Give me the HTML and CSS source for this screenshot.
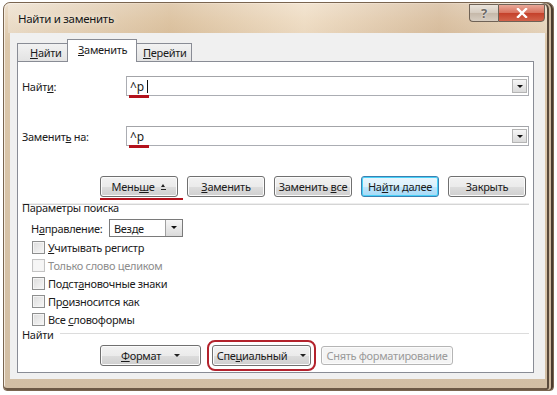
FILE: index.html
```html
<!DOCTYPE html>
<html lang="ru">
<head>
  <meta charset="UTF-8">
  <title>Найти и заменить</title>
  <link rel="stylesheet" href="styles.css">
</head>
<body>
  <div class="window">
    <div class="titlebar">
      <span class="title">Найти и заменить</span>
      <div class="caption-btns">
        <div class="cap help">?</div>
        <div class="cap close">
          <svg width="12" height="10" viewBox="0 0 12 10"><path d="M2 1 L10 9 M10 1 L2 9" stroke="#fff" stroke-width="2.4" stroke-linecap="square"/></svg>
        </div>
      </div>
    </div>

    <div class="client">
      <!-- Tabs -->
      <div class="tabs">
        <div class="tab"><u>Н</u>айти</div>
        <div class="tab active"><u>З</u>аменить</div>
        <div class="tab"><u>П</u>ерейти</div>
      </div>

      <div class="panel">
        <div class="field first">
          <span class="label">Найт<u>и</u>:</span>
          <div class="combo">
            <span class="value marked">^p</span><span class="caret"></span>
            <span class="arrow-btn"></span>
          </div>
        </div>

        <div class="field">
          <span class="label">Заменит<u>ь</u> на:</span>
          <div class="combo">
            <span class="value marked">^p</span>
            <span class="arrow-btn"></span>
          </div>
        </div>

        <div class="actions">
          <button class="btn marked-btn"><span>Мень<u>ш</u>е</span><span class="up-glyph"></span></button>
          <button class="btn"><span><u>З</u>аменить</span></button>
          <button class="btn"><span>Заменить <u>в</u>се</span></button>
          <button class="btn default"><span>На<u>й</u>ти далее</span></button>
          <button class="btn"><span>Закрыть</span></button>
        </div>

        <!-- Search options -->
        <div class="options">
          <div class="section-title">Параметры поиска</div>
          <div class="direction">
            <span>Н<u>а</u>правление:</span>
            <div class="select">
              <span>Везде</span>
              <span class="arrow-btn"></span>
            </div>
          </div>
          <div class="check"><span class="box"></span><span><u>У</u>читывать регистр</span></div>
          <div class="check disabled"><span class="box"></span><span>Только слово целиком</span></div>
          <div class="check"><span class="box"></span><span>Подст<u>а</u>новочные знаки</span></div>
          <div class="check"><span class="box"></span><span>Пр<u>о</u>износится как</span></div>
          <div class="check"><span class="box"></span><span>Все <u>с</u>ловоформы</span></div>
        </div>

        <div class="find-group">
          <div class="group-title"><span>Найти</span><span class="rule"></span></div>
          <div class="format-row">
            <button class="btn menu w-format"><span><u>Ф</u>ормат</span><span class="tri"></span></button>
            <button class="btn menu w-special boxed"><span>Спе<u>ц</u>иальный</span><span class="tri"></span></button>
            <button class="btn w-clear" disabled><span>Снять форматирование</span></button>
          </div>
        </div>
      </div>
    </div>
  </div>
</body>
</html>
```

FILE: styles.css
```css
body {
  margin: 0;
  background: #fff;
  font-family: "Noto Sans", "Open Sans", sans-serif;
  font-size: 11px;
  letter-spacing: -0.3px;
  color: #1b1b1b;
}

u {
  text-decoration: underline;
  text-underline-offset: 1px;
}

/* ---- window frame ---- */
.window {
  box-sizing: border-box;
  width: 551px;
  height: 389px;
  margin: 2px 0 0 3px;
  border: 1px solid #7a6550;
  border-radius: 7px 7px 4px 4px;
  padding: 0 8px 11px 6px;
  display: flex;
  flex-direction: column;
  background: linear-gradient(180deg, #ecdfcd 0px, #e6d3b9 18px, #dcc7aa 40px, #d2bea4 100%);
  box-shadow: inset -2px 0 0 #4b3c2f, inset -4px 0 0 #cdb89e, inset -6px 0 0 #5a4a3b,
              inset 0 -2px 0 #6c5845, inset 1px 1px 0 #f5ece0;
}

.titlebar {
  height: 30px;
  display: flex;
  align-items: flex-start;
  justify-content: space-between;
  background: linear-gradient(90deg, rgba(255,255,255,0.25), rgba(200,160,110,0.3) 30%, rgba(255,240,220,0.35) 55%, rgba(190,150,110,0.3) 80%, rgba(255,255,255,0.1));
  margin: 0 -2px 0 -2px;
}

.title {
  margin: 8px 0 0 10px;
  font-size: 11.5px;
  color: #151515;
  text-shadow: 0 0 6px rgba(255,255,255,0.9);
}

.caption-btns {
  display: flex;
  margin: 1px 2px 0 0;
}

.cap {
  height: 18px;
  display: flex;
  align-items: center;
  justify-content: center;
  border: 1px solid #6f6256;
  box-sizing: border-box;
}

.cap.help {
  width: 29px;
  border-radius: 0 0 0 4px;
  border-right: none;
  background: linear-gradient(180deg, #eae4dc, #d5cbbf 50%, #c5b8a9 51%, #d7cdc1);
  color: #6e6a66;
  font-weight: bold;
  font-size: 13px;
  text-shadow: 0 0 2px #fff;
}

.cap.close {
  width: 47px;
  border-radius: 0 0 4px 0;
  background: linear-gradient(180deg, #e9a898, #d8705c 50%, #c4402a 51%, #d2634a);
}

/* ---- client area ---- */
.client {
  flex: 1;
  background: #f0f0f0;
  padding: 6px 11px 6px 7px;
  display: flex;
  flex-direction: column;
}

.tabs {
  display: flex;
  align-items: flex-end;
  height: 22px;
  position: relative;
  z-index: 1;
}

.tab {
  height: 18px;
  line-height: 17px;
  box-sizing: border-box;
  padding: 0 0 0 12px;
  border: 1px solid #898c95;
  border-bottom: none;
  background: linear-gradient(180deg, #f2f2f2, #e3e3e3);
  margin-right: -1px;
}

.tab:nth-child(1) { width: 52px; }
.tab:nth-child(3) { width: 57px; padding-left: 7px; }

.tab.active {
  height: 23px;
  width: 70px;
  padding-left: 10px;
  line-height: 19px;
  background: #fff;
  margin-bottom: -1px;
  margin-left: -1px;
  margin-right: -2px;
  position: relative;
}

.panel {
  flex: 1;
  background: #fff;
  border: 1px solid #898c95;
  padding: 0 4px 0 4px;
  display: flex;
  flex-direction: column;
}

/* ---- find / replace fields ---- */
.field {
  display: flex;
  align-items: center;
  height: 20px;
  margin-top: 30px;
}

.field.first { margin-top: 14px; }

.label {
  width: 104px;
}

.combo {
  flex: 1;
  height: 20px;
  box-sizing: border-box;
  border: 1px solid #abadb3;
  border-top-color: #a3a4a8;
  display: flex;
  align-items: center;
  padding: 0 1px 0 3px;
  font-size: 12px;
  letter-spacing: 0;
}

.value {
  position: relative;
}

/* red marks drawn over the screenshot */
.value.marked::after {
  content: "";
  position: absolute;
  left: -1px;
  right: -5px;
  top: 17px;
  height: 3px;
  background: #b4121c;
}

.caret {
  width: 1px;
  height: 13px;
  background: #111;
  margin-left: 3px;
}

.arrow-btn {
  margin-left: auto;
  width: 15px;
  height: 14px;
  box-sizing: border-box;
  border: 1px solid #b4b4b4;
  background: linear-gradient(180deg, #f6f6f6, #dadada);
  position: relative;
}

.arrow-btn::after {
  content: "";
  position: absolute;
  left: 4px;
  top: 5px;
  border-left: 3px solid transparent;
  border-right: 3px solid transparent;
  border-top: 3px solid #111;
}

/* ---- buttons ---- */
.actions {
  display: flex;
  gap: 9px;
  margin: 30px 0 0 78px;
}

.btn {
  height: 21px;
  width: 78px;
  box-sizing: border-box;
  border: 1px solid #707070;
  border-radius: 3px;
  background: linear-gradient(180deg, #f2f2f2 0%, #ebebeb 50%, #dddddd 51%, #cfcfcf 100%);
  box-shadow: inset 0 0 0 1px #fbfbfb;
  font-family: inherit;
  font-size: 11px;
  letter-spacing: -0.3px;
  color: #1b1b1b;
  padding: 0;
  display: flex;
  align-items: center;
  justify-content: center;
}

.btn.default {
  border-color: #3c7fb1;
  background: linear-gradient(180deg, #eaf6fd 0%, #d9f0fc 50%, #bee6fd 51%, #a7d9f5 100%);
  box-shadow: inset 0 0 0 1px #48d2f8;
}

.marked-btn {
  position: relative;
}

.marked-btn::after {
  content: "";
  position: absolute;
  left: -1px;
  right: -6px;
  top: 21px;
  height: 2px;
  background: #b4121c;
}

.up-glyph {
  margin-left: 7px;
  width: 5px;
  height: 6px;
  position: relative;
}

.up-glyph::before {
  content: "";
  position: absolute;
  top: 0;
  left: 0;
  border-left: 2.5px solid transparent;
  border-right: 2.5px solid transparent;
  border-bottom: 3px solid #222;
}

.up-glyph::after {
  content: "";
  position: absolute;
  bottom: 0;
  left: 0;
  width: 5px;
  height: 1px;
  background: #222;
}

/* ---- search options ---- */
.options {
  margin-top: 7px;
  border-top: 1px solid #d5d5d5;
  box-shadow: 0 -1px 0 #eeeeee;
}

.section-title {
  line-height: 14px;
  margin-top: -4px;
}

.direction {
  display: flex;
  align-items: center;
  margin: 4px 0 1px 9px;
  height: 18px;
}

.direction > span:first-child {
  width: 78px;
}

.select {
  width: 74px;
  height: 18px;
  box-sizing: border-box;
  border: 1px solid #7a7a7a;
  display: flex;
  align-items: center;
  padding: 0 0 0 4px;
}

.select .arrow-btn {
  height: 16px;
  width: 17px;
  border: none;
  border-left: 1px solid #a0a0a0;
}

.select .arrow-btn::after {
  left: 5px;
  top: 6px;
}

.check {
  display: flex;
  align-items: center;
  height: 18px;
  margin-left: 10px;
}

.box {
  width: 13px;
  height: 13px;
  box-sizing: border-box;
  border: 1px solid #8e8f8f;
  background: linear-gradient(135deg, #dcdcdc, #f7f7f7);
  box-shadow: inset 0 0 0 1px #f4f4f4;
  margin-right: 3px;
}

.check.disabled {
  color: #8d8d8d;
}

.check.disabled .box {
  border-color: #c4c4c4;
  background: #f6f6f6;
}

/* ---- find group ---- */
.group-title {
  display: flex;
  align-items: center;
  line-height: 13px;
}

.group-title .rule {
  flex: 1;
  height: 1px;
  background: #dcdcdc;
  margin: -3px 0 0 6px;
}

.format-row {
  display: flex;
  gap: 11px;
  margin: 4px 0 0 78px;
}

.btn.menu {
  gap: 13px;
}

.tri {
  border-left: 3px solid transparent;
  border-right: 3px solid transparent;
  border-top: 3px solid #222;
}

.w-format { width: 101px; }
.w-special { width: 99px; }
.w-clear { width: 132px; height: 19px; margin-top: 1px; margin-left: -1px; }

.boxed {
  outline: 2px solid #b3222c;
  outline-offset: 3px;
}

.btn:disabled {
  color: #9a9a9a;
  border-color: #b5b5b5;
  background: #f4f4f4;
}
```
